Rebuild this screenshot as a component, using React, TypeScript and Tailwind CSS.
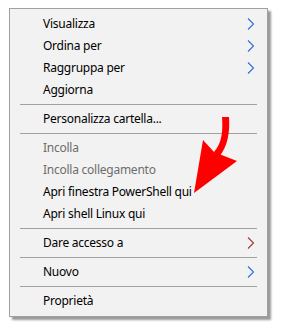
import React from 'react';

type Item = { label: string; sub?: boolean; disabled?: boolean; chevron?: string };

const groups: Item[][] = [
  [
    { label: 'Visualizza', sub: true },
    { label: 'Ordina per', sub: true },
    { label: 'Raggruppa per', sub: true },
    { label: 'Aggiorna' },
  ],
  [{ label: 'Personalizza cartella...' }],
  [
    { label: 'Incolla', disabled: true },
    { label: 'Incolla collegamento', disabled: true },
    { label: 'Apri finestra PowerShell qui' },
    { label: 'Apri shell Linux qui' },
  ],
  [{ label: 'Dare accesso a', sub: true, chevron: '#9a3a3a' }],
  [{ label: 'Nuovo', sub: true }],
  [{ label: 'Proprietà' }],
];

const Chevron = ({ color }: { color: string }) => (
  <svg width="8" height="12" viewBox="0 0 8 12" className="shrink-0">
    <path d="M1 0.5 L6.5 6 L1 11.5" fill="none" stroke={color} strokeWidth="1.1" />
  </svg>
);

const MenuRow = ({ item }: { item: Item }) => (
  <div className="flex h-[22px] items-center pl-[33px] pr-[12px]">
    <span className={`flex-1 text-[12px] tracking-[-0.25px] ${item.disabled ? 'text-[#6d6d6d]' : 'text-black'}`}>
      {item.label}
    </span>
    {item.sub && <Chevron color={item.chevron ?? '#2f6fd0'} />}
  </div>
);

export default function App() {
  return (
    <div className="relative h-[336px] w-[284px] bg-white" style={{ fontFamily: '"Noto Sans", "Open Sans", sans-serif' }}>
      <div className="absolute left-[9px] top-[8px] w-[259px] border border-[#a0a0a0] bg-[#f2f2f2] pb-[4px] pt-[4px] shadow-[3px_3px_2px_rgba(0,0,0,0.4)]">
        {groups.map((g, gi) => (
          <div key={gi}>
            {gi > 0 && (
              <div className="flex h-[7px] items-center px-[10px]">
                <div className="h-px w-full bg-[#a0a0a0]" />
              </div>
            )}
            {g.map(item => (
              <MenuRow key={item.label} item={item} />
            ))}
          </div>
        ))}
      </div>
      <svg className="absolute left-0 top-0" width="284" height="336" viewBox="0 0 284 336">
        <path
          d="M222 117 L229 117 C230 132 228 146 219 157 L214 152 C222 143 223 131 222 117 Z"
          fill="#ff0000"
        />
        <polygon points="194,193 203,140 214,152 237,161" fill="#ff0000" />
      </svg>
    </div>
  );
}
